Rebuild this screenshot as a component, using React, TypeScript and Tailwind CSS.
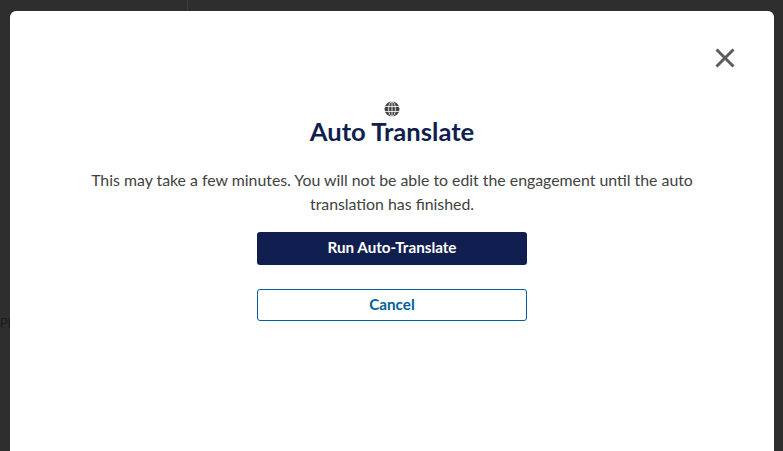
export default function App() {
    return (
        <div className="relative flex h-[451px] w-[783px] overflow-hidden bg-[#2e2e2e] pl-[10px] pr-[9px] pt-[11px] font-['Lato',sans-serif]">
            {/* page behind the overlay, barely visible */}
            <span className="absolute left-0 top-[314px] w-[10px] overflow-hidden text-[13px] leading-[18px] text-[#1c1c1c]">Pl</span>
            <div className="absolute left-[187px] top-0 h-[11px] w-px bg-[#3a3a3a]" />

            <div className="flex h-[460px] w-full flex-col items-center rounded-t-[6px] bg-white">
                <div className="flex w-full justify-end pr-[35px] pt-[33px]">
                    <svg width="28" height="28" viewBox="0 0 28 28" className="text-[#5c5c5c]">
                        <path d="M5.5 5.5 L22.5 22.5 M22.5 5.5 L5.5 22.5" stroke="currentColor" strokeWidth="3" fill="none" />
                    </svg>
                </div>
                <svg width="16" height="16" viewBox="0 0 16 16" className="mt-[29px]">
                    <circle cx="8" cy="8" r="7.5" fill="#444444" />
                    <g stroke="#ffffff" strokeWidth="0.8" fill="none">
                        <ellipse cx="8" cy="8" rx="3.4" ry="7.5" />
                        <path d="M8 0.5 V15.5 M1 5.5 H15 M1 10.5 H15" />
                    </g>
                </svg>
                <h2 className="mt-[-1px] text-[25.6px] font-bold leading-[30px] text-[#101f4f]">Auto Translate</h2>
                <p className="mt-[22px] w-[640px] text-center text-[15.85px] leading-[24px] text-[#414141]">
                    This may take a few minutes. You will not be able to edit the engagement until the auto translation has finished.
                </p>
                <button type="button" className="mt-[16px] h-[33px] w-[270px] rounded-[3px] bg-[#101f4f] pb-[2px] text-[15.2px] font-bold text-white">
                    Run Auto-Translate
                </button>
                <button type="button" className="mt-[24px] h-[32px] w-[270px] rounded-[3px] border border-[#00609c] bg-white pb-[2px] text-[15.2px] font-bold text-[#00609c]">
                    Cancel
                </button>
            </div>
        </div>
    );
}
